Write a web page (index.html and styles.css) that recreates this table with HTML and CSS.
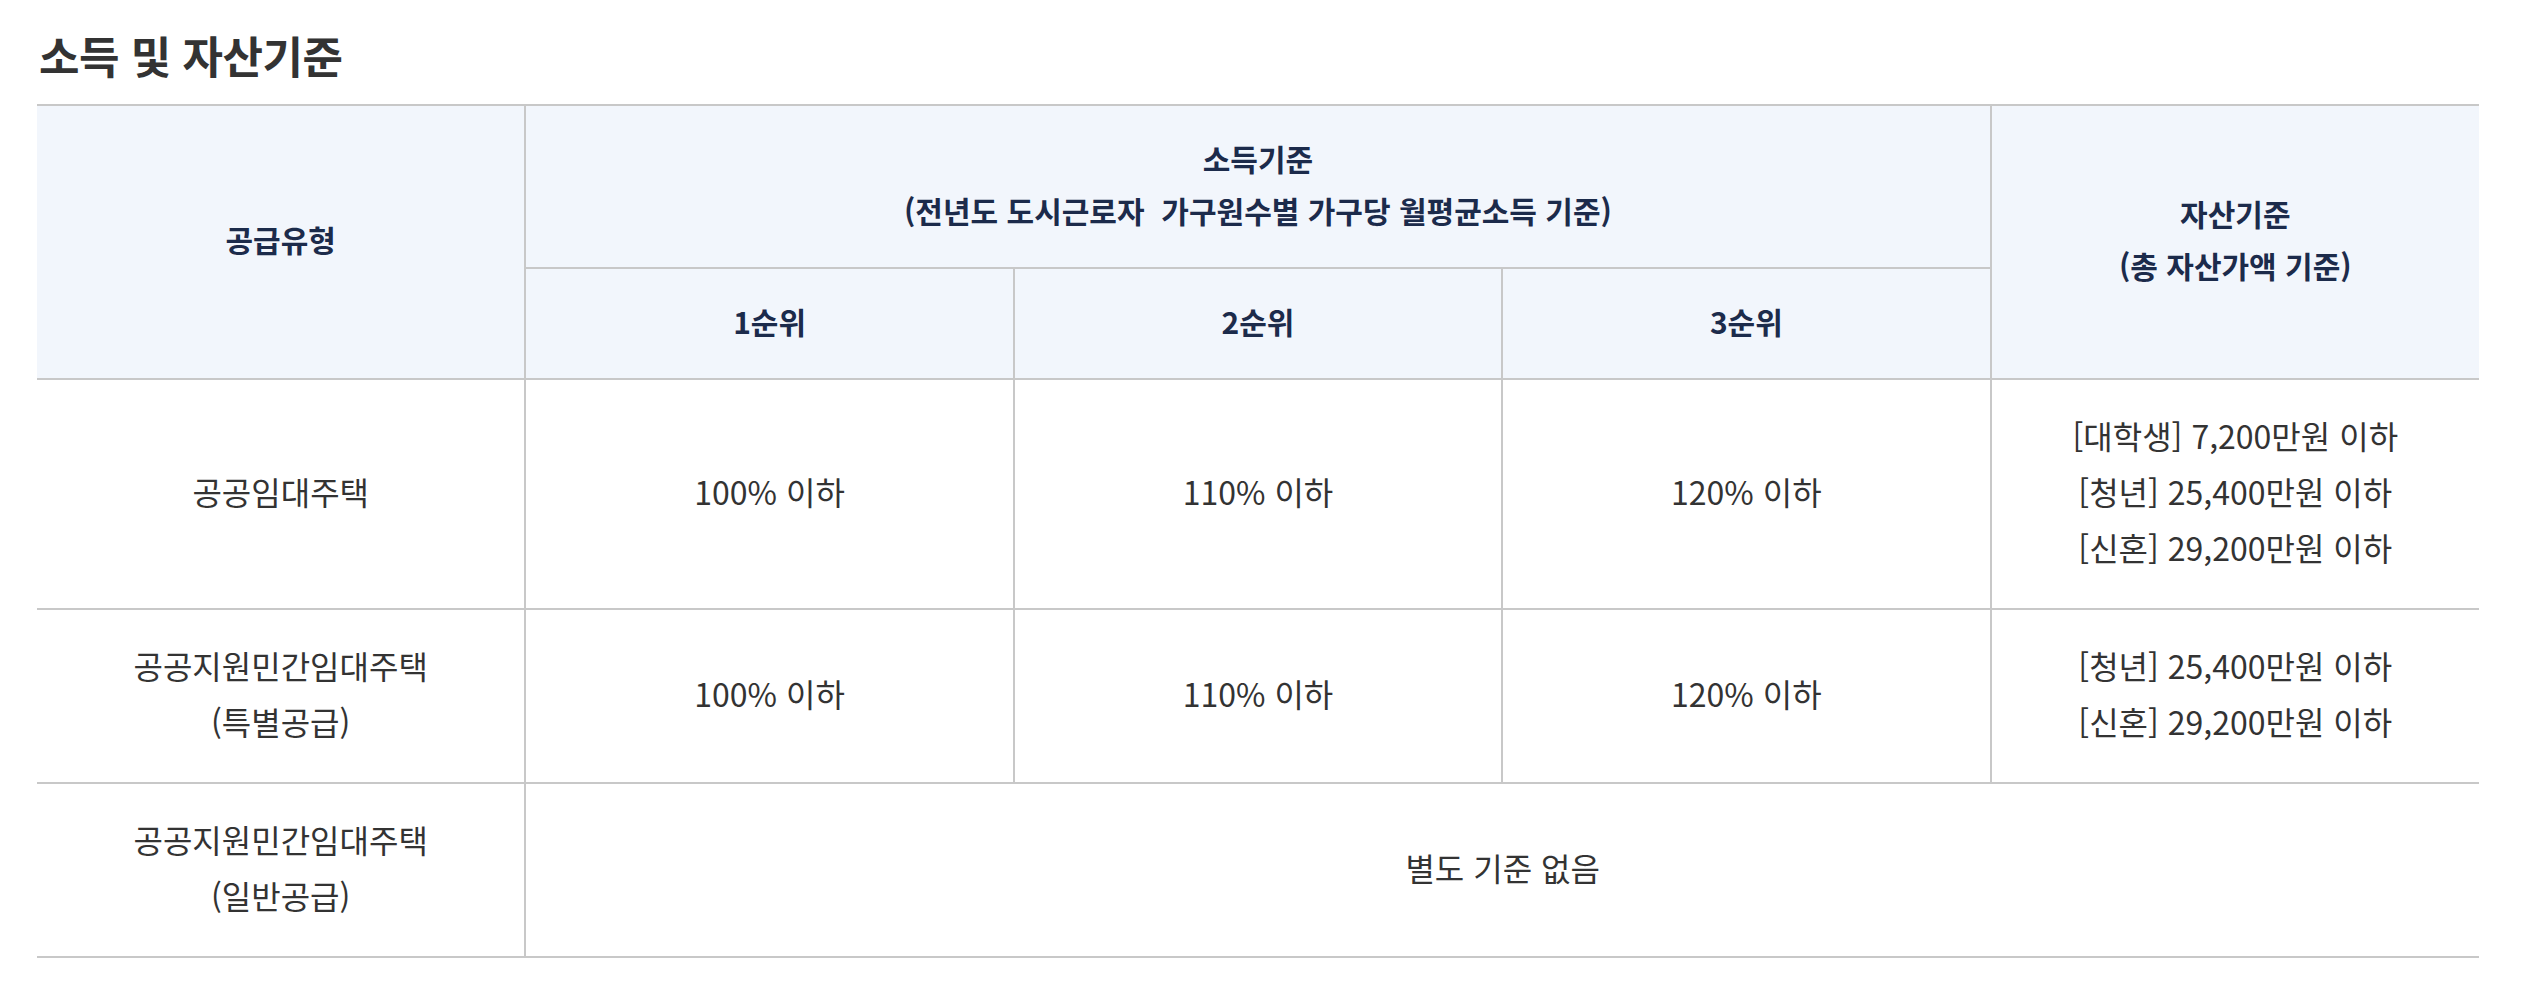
FILE: index.html
```html
<!DOCTYPE html>
<html lang="ko">
<head>
<meta charset="utf-8">
<title>소득 및 자산기준</title>
<link rel="stylesheet" href="styles.css">
</head>
<body>
<section class="section">
  <h2 class="section-title">소득 및 자산기준</h2>
  <table class="criteria">
    <colgroup>
      <col class="col"><col class="col"><col class="col"><col class="col"><col class="col">
    </colgroup>
    <thead>
      <tr>
        <th rowspan="2" class="h-first">공급유형</th>
        <th colspan="3">소득기준<br>(전년도 도시근로자&nbsp; 가구원수별 가구당 월평균소득 기준)</th>
        <th rowspan="2" class="h-last">자산기준<br>(총 자산가액 기준)</th>
      </tr>
      <tr>
        <th>1순위</th>
        <th>2순위</th>
        <th>3순위</th>
      </tr>
    </thead>
    <tbody>
      <tr>
        <td class="c-first">공공임대주택</td>
        <td>100% 이하</td>
        <td>110% 이하</td>
        <td>120% 이하</td>
        <td class="c-last">[대학생] 7,200만원 이하<br>[청년] 25,400만원 이하<br>[신혼] 29,200만원 이하</td>
      </tr>
      <tr>
        <td class="c-first">공공지원민간임대주택<br>(특별공급)</td>
        <td>100% 이하</td>
        <td>110% 이하</td>
        <td>120% 이하</td>
        <td class="c-last">[청년] 25,400만원 이하<br>[신혼] 29,200만원 이하</td>
      </tr>
      <tr>
        <td class="c-first">공공지원민간임대주택<br>(일반공급)</td>
        <td colspan="4" class="c-last">별도 기준 없음</td>
      </tr>
    </tbody>
  </table>
</section>
</body>
</html>
```
FILE: styles.css
```css
html, body {
  margin: 0;
  padding: 0;
  background: #ffffff;
}

body {
  font-family: "Noto Sans CJK KR", "Noto Sans", sans-serif;
  color: #333333;
}

.section {
  padding: 26px 57px 40px 37px;
}

.section-title {
  margin: 0 0 18px 2px;
  font-size: 44px;
  line-height: 58px;
  font-weight: 700;
  color: #333333;
  letter-spacing: -0.5px;
  padding-bottom: 2px;
}

.criteria {
  width: 100%;
  border-collapse: collapse;
  table-layout: fixed;
  border-top: 2px solid #c8c8c8;
}

.col {
  width: 20%;
}

.criteria th,
.criteria td {
  border: 2px solid #c8c8c8;
  text-align: center;
  vertical-align: middle;
}

.criteria th {
  background: #f2f6fc;
  color: #1c2b4b;
  font-size: 30px;
  font-weight: 600;
  line-height: 52px;
  padding: 25.5px 10px 31.5px;
}

.criteria td {
  color: #333333;
  font-size: 32px;
  font-weight: 400;
  line-height: 56px;
  padding: 27px 10px 33px;
}

.criteria .h-first,
.criteria .c-first {
  border-left: none;
}

.criteria .h-last,
.criteria .c-last {
  border-right: none;
}
```
